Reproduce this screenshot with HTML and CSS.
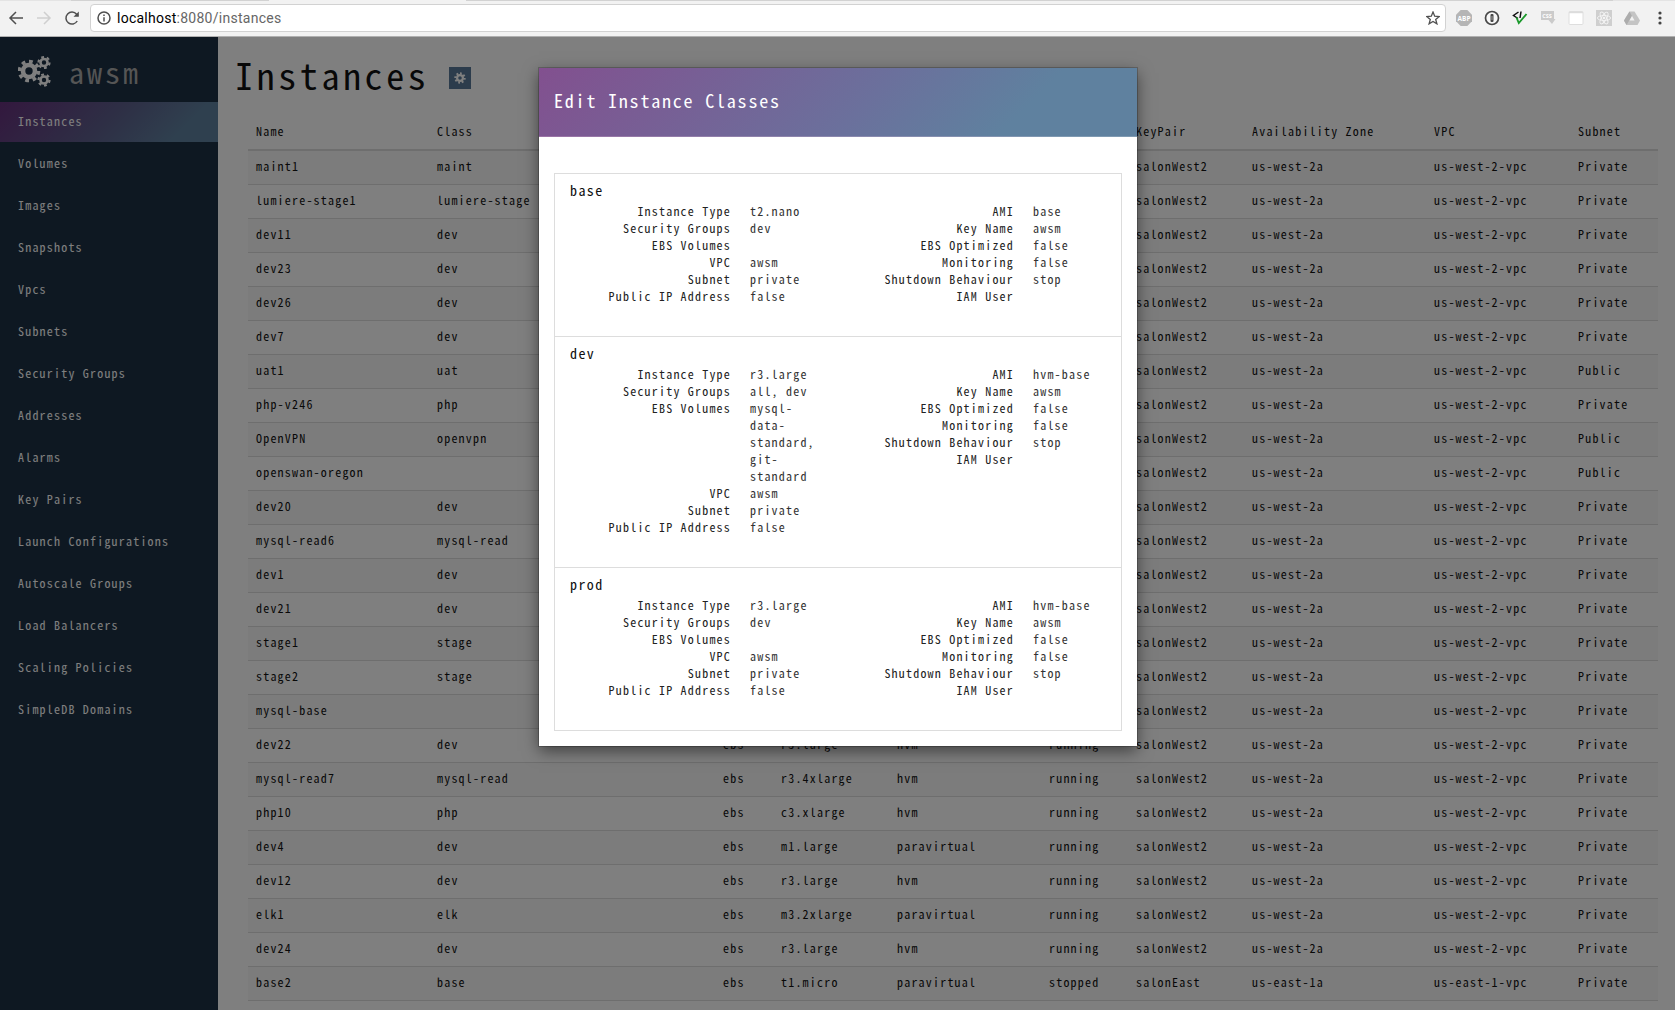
FILE: index.html
```html
<!DOCTYPE html>
<html lang="en">
<head>
<meta charset="utf-8">
<title>awsm</title>
<link rel="stylesheet" href="styles.css">
</head>
<body>
<header class="toolbar">
  <nav class="history">
    <svg width="16" height="16" viewBox="0 0 16 16" class="ico dark"><path d="M15 8H2.2M8 2 2 8l6 6"/></svg>
    <svg width="16" height="16" viewBox="0 0 16 16" class="ico pale"><path d="M1 8h12.800M8 2l6 6-6 6"/></svg>
    <svg width="16" height="16" viewBox="0 0 16 16" class="ico dark"><path d="M13.200 11A6 6 0 1 1 12.600 4.200L14 5.600"/><path d="M14.800 1.500v5.300H9.500z" class="solid"/></svg>
  </nav>
  <div class="address">
    <svg width="14" height="14" viewBox="0 0 14 14" class="ico dark"><circle cx="7" cy="7" r="6"/><path d="M7 6.200v4.200M7 3.400v1.500"/></svg>
    <span class="url"><b>localhost</b>:8080/instances</span>
    <svg width="14" height="14" viewBox="0 0 14 14" class="ico dark star"><path d="M7 1l1.700 4.200 4.500.3-3.500 2.900 1.200 4.400L7 10.400l-3.900 2.400 1.200-4.400L.8 5.500l4.500-.3z"/></svg>
  </div>
  <div class="extensions">
    <svg width="16" height="16" viewBox="0 0 16 16"><path d="M4.700 0h6.600L16 4.700v6.600L11.300 16H4.700L0 11.300V4.700z" fill="#b5b5b5"/><text x="8" y="10.700" class="abp">ABP</text></svg>
    <svg width="16" height="16" viewBox="0 0 16 16"><circle cx="8" cy="8" r="6.500" fill="#f7f7f7" stroke="#484848" stroke-width="1.700"/><rect x="6.500" y="4" width="3" height="8" rx="1" fill="#484848"/><path d="M8 6v4" stroke="#ccc" stroke-width=".7"/></svg>
    <svg width="16" height="16" viewBox="0 0 16 16"><path d="M6.500 2 1.500 5.500 6 8.500M9 1.500 8 8" fill="none" stroke="#111" stroke-width="1.500"/><path d="M4.500 7.500 6.800 13 14.500 4" fill="none" stroke="#1c9a2c" stroke-width="1.900"/></svg>
    <svg width="16" height="16" viewBox="0 0 16 16"><path d="M1 1h13v8h1.500L12 14 8.500 10H1z" fill="#cbcbcb"/><text x="7" y="7.800" class="css">CSS</text></svg>
    <svg width="16" height="16" viewBox="0 0 16 16"><rect x="1" y="1.500" width="14" height="13" rx="1" fill="#fff" stroke="#dedede"/><path d="M1 2.500h14" stroke="#dcdcdc" stroke-width="1.500"/></svg>
    <svg width="16" height="16" viewBox="0 0 16 16"><rect width="16" height="16" fill="#cfcfcf"/><g fill="none" stroke="#f4f4f4" stroke-width=".9"><ellipse cx="8" cy="8" rx="6.600" ry="2.500"/><ellipse cx="8" cy="8" rx="6.600" ry="2.500" transform="rotate(60 8 8)"/><ellipse cx="8" cy="8" rx="6.600" ry="2.500" transform="rotate(120 8 8)"/></g><circle cx="8" cy="8" r="1.300" fill="#f4f4f4"/></svg>
    <svg width="16" height="16" viewBox="0 0 16 16"><path d="M5.500 1.500h5L16 10.500 13.500 15h-11L0 10.500z" fill="#c4c4c4"/><path d="M5.500 1.500 0 10.500 2.500 15 8 6z" fill="#adadad"/><path d="M8 6 5.500 10.500h5z" fill="#f2f2f2"/></svg>
    <svg width="16" height="16" viewBox="0 0 16 16" fill="#444"><circle cx="8" cy="3" r="1.600"/><circle cx="8" cy="8" r="1.600"/><circle cx="8" cy="13" r="1.600"/></svg>
  </div>
</header>

<div class="app">
  <aside class="sidebar">
    <div class="brand">
      <svg class="cogs" width="34" height="32" viewBox="0 0 34 32">
        <circle cx="11" cy="16" r="6"/><circle cx="11" cy="16" r="9.600" pathLength="16" class="teeth"/>
        <circle cx="26" cy="7.500" r="3.500" class="small"/><circle cx="26" cy="7.500" r="5.500" pathLength="12" class="teeth small"/>
        <circle cx="26" cy="25" r="3.500" class="small"/><circle cx="26" cy="25" r="5.500" pathLength="12" class="teeth small"/>
      </svg>
      <span class="brand-name">awsm</span>
    </div>
    <ul class="menu">
      <li class="active">Instances</li><li>Volumes</li><li>Images</li><li>Snapshots</li><li>Vpcs</li><li>Subnets</li><li>Security Groups</li><li>Addresses</li><li>Alarms</li><li>Key Pairs</li><li>Launch Configurations</li><li>Autoscale Groups</li><li>Load Balancers</li><li>Scaling Policies</li><li>SimpleDB Domains</li>
    </ul>
  </aside>

  <main class="content">
    <div class="heading">
      <h1>Instances</h1>
      <span class="settings"><svg class="cog" width="12" height="12" viewBox="0 0 12 12"><circle cx="6" cy="6" r="2.900"/><circle cx="6" cy="6" r="4.700" pathLength="16" class="teeth"/></svg></span>
    </div>
    <table class="grid">
      <colgroup><col class="c-name"><col class="c-class"><col class="c-root"><col class="c-type"><col class="c-virt"><col class="c-state"><col class="c-key"><col class="c-zone"><col class="c-vpc"><col class="c-subnet"></colgroup>
      <thead><tr><th>Name</th><th>Class</th><th></th><th></th><th></th><th></th><th>KeyPair</th><th>Availability Zone</th><th>VPC</th><th>Subnet</th></tr></thead>
      <tbody>
      <tr><td>maint1</td><td>maint</td><td></td><td></td><td></td><td></td><td>salonWest2</td><td>us-west-2a</td><td>us-west-2-vpc</td><td>Private</td></tr>
      <tr><td>lumiere-stage1</td><td>lumiere-stage</td><td></td><td></td><td></td><td></td><td>salonWest2</td><td>us-west-2a</td><td>us-west-2-vpc</td><td>Private</td></tr>
      <tr><td>dev11</td><td>dev</td><td></td><td></td><td></td><td></td><td>salonWest2</td><td>us-west-2a</td><td>us-west-2-vpc</td><td>Private</td></tr>
      <tr><td>dev23</td><td>dev</td><td></td><td></td><td></td><td></td><td>salonWest2</td><td>us-west-2a</td><td>us-west-2-vpc</td><td>Private</td></tr>
      <tr><td>dev26</td><td>dev</td><td></td><td></td><td></td><td></td><td>salonWest2</td><td>us-west-2a</td><td>us-west-2-vpc</td><td>Private</td></tr>
      <tr><td>dev7</td><td>dev</td><td></td><td></td><td></td><td></td><td>salonWest2</td><td>us-west-2a</td><td>us-west-2-vpc</td><td>Private</td></tr>
      <tr><td>uat1</td><td>uat</td><td></td><td></td><td></td><td></td><td>salonWest2</td><td>us-west-2a</td><td>us-west-2-vpc</td><td>Public</td></tr>
      <tr><td>php-v246</td><td>php</td><td></td><td></td><td></td><td></td><td>salonWest2</td><td>us-west-2a</td><td>us-west-2-vpc</td><td>Private</td></tr>
      <tr><td>OpenVPN</td><td>openvpn</td><td></td><td></td><td></td><td></td><td>salonWest2</td><td>us-west-2a</td><td>us-west-2-vpc</td><td>Public</td></tr>
      <tr><td>openswan-oregon</td><td></td><td></td><td></td><td></td><td></td><td>salonWest2</td><td>us-west-2a</td><td>us-west-2-vpc</td><td>Public</td></tr>
      <tr><td>dev20</td><td>dev</td><td></td><td></td><td></td><td></td><td>salonWest2</td><td>us-west-2a</td><td>us-west-2-vpc</td><td>Private</td></tr>
      <tr><td>mysql-read6</td><td>mysql-read</td><td></td><td></td><td></td><td></td><td>salonWest2</td><td>us-west-2a</td><td>us-west-2-vpc</td><td>Private</td></tr>
      <tr><td>dev1</td><td>dev</td><td></td><td></td><td></td><td></td><td>salonWest2</td><td>us-west-2a</td><td>us-west-2-vpc</td><td>Private</td></tr>
      <tr><td>dev21</td><td>dev</td><td></td><td></td><td></td><td></td><td>salonWest2</td><td>us-west-2a</td><td>us-west-2-vpc</td><td>Private</td></tr>
      <tr><td>stage1</td><td>stage</td><td></td><td></td><td></td><td></td><td>salonWest2</td><td>us-west-2a</td><td>us-west-2-vpc</td><td>Private</td></tr>
      <tr><td>stage2</td><td>stage</td><td></td><td></td><td></td><td></td><td>salonWest2</td><td>us-west-2a</td><td>us-west-2-vpc</td><td>Private</td></tr>
      <tr><td>mysql-base</td><td></td><td></td><td></td><td></td><td></td><td>salonWest2</td><td>us-west-2a</td><td>us-west-2-vpc</td><td>Private</td></tr>
      <tr><td>dev22</td><td>dev</td><td>ebs</td><td>r3.large</td><td>hvm</td><td>running</td><td>salonWest2</td><td>us-west-2a</td><td>us-west-2-vpc</td><td>Private</td></tr>
      <tr><td>mysql-read7</td><td>mysql-read</td><td>ebs</td><td>r3.4xlarge</td><td>hvm</td><td>running</td><td>salonWest2</td><td>us-west-2a</td><td>us-west-2-vpc</td><td>Private</td></tr>
      <tr><td>php10</td><td>php</td><td>ebs</td><td>c3.xlarge</td><td>hvm</td><td>running</td><td>salonWest2</td><td>us-west-2a</td><td>us-west-2-vpc</td><td>Private</td></tr>
      <tr><td>dev4</td><td>dev</td><td>ebs</td><td>m1.large</td><td>paravirtual</td><td>running</td><td>salonWest2</td><td>us-west-2a</td><td>us-west-2-vpc</td><td>Private</td></tr>
      <tr><td>dev12</td><td>dev</td><td>ebs</td><td>r3.large</td><td>hvm</td><td>running</td><td>salonWest2</td><td>us-west-2a</td><td>us-west-2-vpc</td><td>Private</td></tr>
      <tr><td>elk1</td><td>elk</td><td>ebs</td><td>m3.2xlarge</td><td>paravirtual</td><td>running</td><td>salonWest2</td><td>us-west-2a</td><td>us-west-2-vpc</td><td>Private</td></tr>
      <tr><td>dev24</td><td>dev</td><td>ebs</td><td>r3.large</td><td>hvm</td><td>running</td><td>salonWest2</td><td>us-west-2a</td><td>us-west-2-vpc</td><td>Private</td></tr>
      <tr><td>base2</td><td>base</td><td>ebs</td><td>t1.micro</td><td>paravirtual</td><td>stopped</td><td>salonEast</td><td>us-east-1a</td><td>us-east-1-vpc</td><td>Private</td></tr>
      <tr><td></td><td></td><td></td><td></td><td></td><td></td><td></td><td></td><td></td><td></td></tr>
      </tbody>
    </table>
  </main>

  <div class="backdrop">
    <section class="modal">
      <h2>Edit Instance Classes</h2>
      <ul class="classes">
        <li>
          <h3>base</h3>
          <div class="columns">
            <dl><dt>Instance Type</dt><dd>t2.nano</dd><dt>Security Groups</dt><dd>dev</dd><dt>EBS Volumes</dt><dd></dd><dt>VPC</dt><dd>awsm</dd><dt>Subnet</dt><dd>private</dd><dt>Public IP Address</dt><dd>false</dd></dl>
            <dl><dt>AMI</dt><dd>base</dd><dt>Key Name</dt><dd>awsm</dd><dt>EBS Optimized</dt><dd>false</dd><dt>Monitoring</dt><dd>false</dd><dt>Shutdown Behaviour</dt><dd>stop</dd><dt>IAM User</dt><dd></dd></dl>
          </div>
        </li>
        <li>
          <h3>dev</h3>
          <div class="columns">
            <dl><dt>Instance Type</dt><dd>r3.large</dd><dt>Security Groups</dt><dd>all, dev</dd><dt>EBS Volumes</dt><dd>mysql-data-standard, git-standard</dd><dt>VPC</dt><dd>awsm</dd><dt>Subnet</dt><dd>private</dd><dt>Public IP Address</dt><dd>false</dd></dl>
            <dl><dt>AMI</dt><dd>hvm-base</dd><dt>Key Name</dt><dd>awsm</dd><dt>EBS Optimized</dt><dd>false</dd><dt>Monitoring</dt><dd>false</dd><dt>Shutdown Behaviour</dt><dd>stop</dd><dt>IAM User</dt><dd></dd></dl>
          </div>
        </li>
        <li>
          <h3>prod</h3>
          <div class="columns">
            <dl><dt>Instance Type</dt><dd>r3.large</dd><dt>Security Groups</dt><dd>dev</dd><dt>EBS Volumes</dt><dd></dd><dt>VPC</dt><dd>awsm</dd><dt>Subnet</dt><dd>private</dd><dt>Public IP Address</dt><dd>false</dd></dl>
            <dl><dt>AMI</dt><dd>hvm-base</dd><dt>Key Name</dt><dd>awsm</dd><dt>EBS Optimized</dt><dd>false</dd><dt>Monitoring</dt><dd>false</dd><dt>Shutdown Behaviour</dt><dd>stop</dd><dt>IAM User</dt><dd></dd></dl>
          </div>
        </li>
      </ul>
    </section>
  </div>
</div>
</body>
</html>
```
FILE: styles.css
```css
* { box-sizing: border-box; }

body {
  margin: 0;
  height: 1010px;
  display: flex;
  flex-direction: column;
  overflow: hidden;
  background: #fff;
  color: #111;
  font: 12px/17px "Noto Sans CJK JP", "DejaVu Sans Mono", monospace;
}

ul, dl, dd, h1, h2, h3 { margin: 0; padding: 0; font-weight: 400; list-style: none; }

/* Browser toolbar */
.toolbar {
  flex: none;
  height: 37px;
  display: flex;
  align-items: center;
  padding: 0 7px 1px 8px;
  background: linear-gradient(90deg, #e4e4e4 71px, #d2d2d2 71px 269px, #f2f2f2 269px 466px, #d2d2d2 466px 1613px, #e4e4e4 1613px) 0 0 / 100% 1px no-repeat #f2f2f2;
  border-bottom: 1px solid #b0b0b0;
}
.history { display: flex; gap: 12px; width: 82px; }
.ico { fill: none; stroke-width: 1.5; flex: none; }
.dark { stroke: #505050; }
.dark .solid { fill: #505050; stroke: none; }
.pale { stroke: #cfcfcf; }
.address {
  width: 1356px;
  height: 28px;
  display: flex;
  align-items: center;
  padding: 0 5px 0 6px;
  background: #fff;
  border: 1px solid #d2d2d2;
  border-radius: 4px;
}
.url { font: 14px/20px Roboto, sans-serif; letter-spacing: .26px; color: #666; margin-left: 6px; padding-top: 1px; }
.url b { font-weight: 400; color: #000; }
.star { margin-left: auto; stroke-width: 1.3; }
.extensions { display: flex; gap: 12px; margin-left: 10px; }
.abp, .css { font: 700 6.5px "Open Sans", sans-serif; fill: #fff; text-anchor: middle; }
.css { font-size: 5.5px; }

/* Application shell */
.app {
  position: relative;
  flex: 1;
  min-height: 0;
  display: flex;
  overflow: hidden;
  font-feature-settings: "hwid";
  letter-spacing: 1.2px;
}

.sidebar { width: 218px; flex: none; background: #1c3044; color: #fff; }
.brand { height: 65px; display: flex; align-items: center; padding: 3px 0 0 18px; }
.brand-name { margin-left: 17px; font-size: 30px; line-height: 44px; letter-spacing: .1em; color: #aaa; font-weight: 400; }
.menu { display: grid; gap: 2px; }
.menu li { height: 40px; padding: 10px 18px 13px; }
.menu .active { background: linear-gradient(135deg, #66307c 0%, #5c5f8b 50%, #5f819f 82%); }

.cogs circle, .cog circle { fill: none; stroke: #fff; stroke-width: 4.600; }
.cogs .teeth { stroke-width: 3.400; stroke-dasharray: 1 1; }
.cogs .small { stroke-width: 2.600; }
.cogs .teeth.small { stroke-width: 2.200; }
.cog circle { stroke-width: 2.200; }
.cog .teeth { stroke-width: 2; stroke-dasharray: 1 1; }

/* Instances table */
.content { flex: 1; min-width: 0; padding: 0 17px 0 30px; }
.heading { display: flex; height: 76px; align-items: center; margin-left: -13px; }
h1 { font-size: 36px; line-height: 48px; letter-spacing: .1em; margin-top: -3px; }
.settings { width: 22px; height: 22px; margin: 6px 0 0 20px; background: #587898; display: flex; align-items: center; justify-content: center; }
.grid { width: 1410px; table-layout: fixed; border-spacing: 0; }
.c-name { width: 181px; } .c-class { width: 286px; } .c-root { width: 58px; } .c-type { width: 116px; } .c-virt { width: 152px; }
.c-state { width: 87px; } .c-key { width: 116px; } .c-zone { width: 182px; } .c-vpc { width: 144px; } .c-subnet { width: 88px; }
th { height: 38px; padding: 9px 8px 10px; text-align: left; font-weight: 400; border-bottom: 2px solid #ddd; }
td { height: 34px; padding: 6px 8px 10px; border-top: 1px solid #ddd; white-space: nowrap; }
tbody tr:first-child td { height: 33px; border-top: 0; }
tbody tr:nth-child(odd) { background: #f9f9f9; }

/* Dialog */
.backdrop {
  position: absolute;
  inset: 0;
  display: flex;
  align-items: flex-start;
  background: rgba(0, 0, 0, .5);
}
.modal { width: 598px; height: 678px; margin: 31px 0 0 539px; background: #fff; box-shadow: 0 0 0 1px rgba(0, 0, 0, .2), 0 5px 15px rgba(0, 0, 0, .5); }
h2 {
  height: 69px;
  padding: 19px 15px;
  font-size: 18px;
  line-height: 26px;
  letter-spacing: .1em;
  color: #fff;
  border-bottom: 1px solid rgba(255, 255, 255, .2);
  background: linear-gradient(135deg, #82508f 0%, #6b709c 54%, #5f819f 79%);
}
.classes { margin: 36px 15px 0; border: 1px solid #ddd; }
.classes li { padding: 6px 15px 32px; }
.classes li + li { border-top: 1px solid #ddd; }
h3 { font-size: 14px; line-height: 20px; letter-spacing: .1em; margin-bottom: 2px; }
.columns { display: flex; align-items: flex-start; color: #333; }
.columns dl { display: grid; grid-template-columns: 161px 72px; column-gap: 19px; grid-auto-rows: minmax(17px, auto); }
.columns dl + dl { grid-template-columns: 192px 72px; }
dt { text-align: right; color: #222; }
```
